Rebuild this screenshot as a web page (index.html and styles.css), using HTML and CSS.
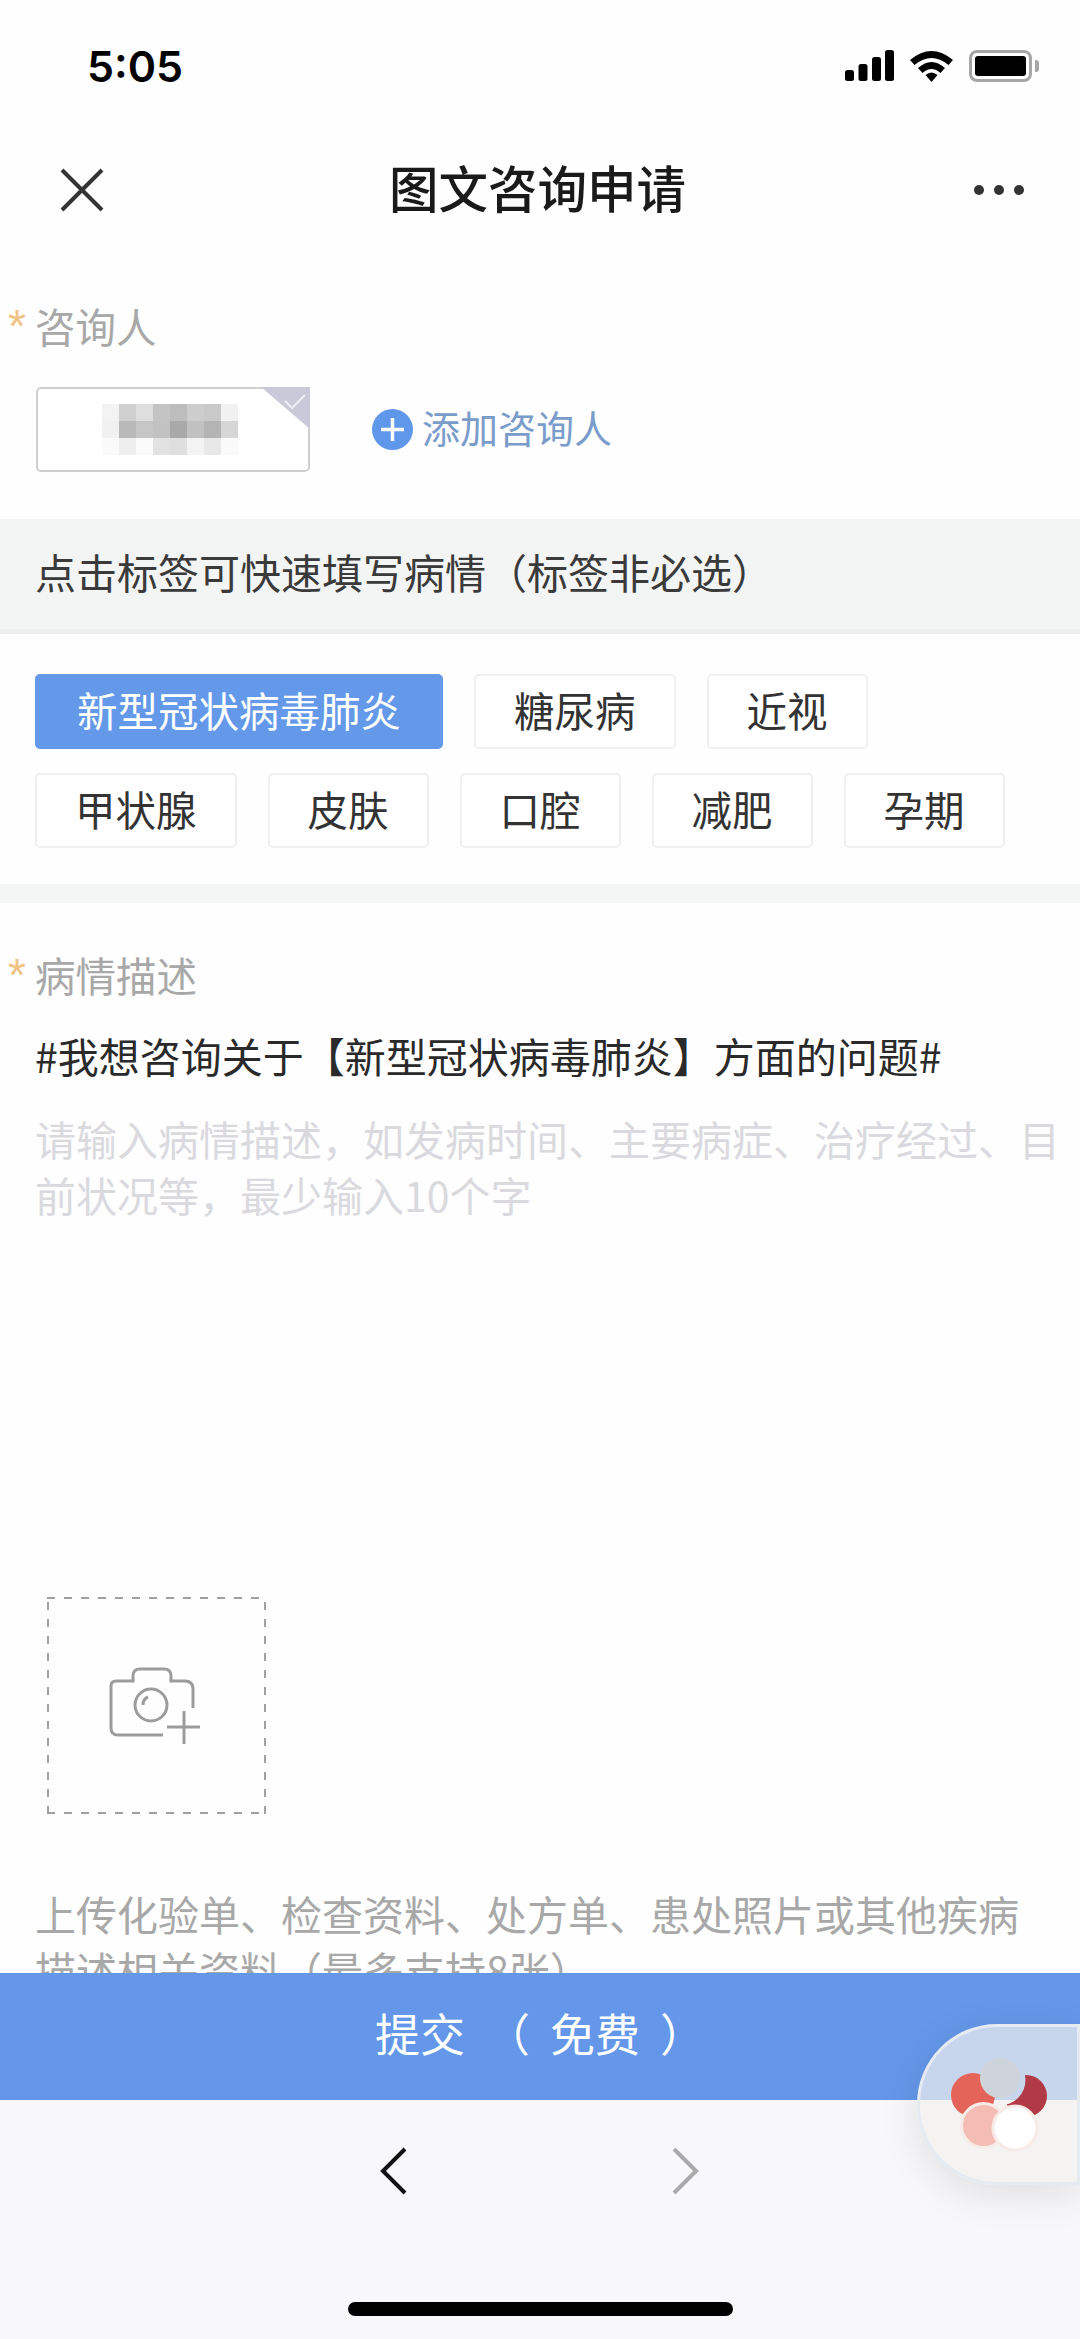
FILE: index.html
```html
<!DOCTYPE html>
<html lang="zh-CN">
  <head>
    <meta charset="UTF-8" />
    <meta name="viewport" content="width=device-width, initial-scale=1.0" />
    <title>图文咨询申请</title>
    <link rel="stylesheet" href="styles.css">
  </head>
  <body>
    <div class="phone">
      <div class="status-bar">
        <span class="time">5:05</span>
        <div class="status-icons">
          <svg width="49" height="32" viewBox="0 0 49 32">
            <rect x="0" y="20" width="9" height="11" rx="2.5" />
            <rect x="13.5" y="14" width="9" height="17" rx="2.5" />
            <rect x="27" y="7" width="9" height="24" rx="2.5" />
            <rect x="40" y="0" width="9" height="31" rx="2.5" />
          </svg>
          <svg width="43" height="32" viewBox="0 0 43 32">
            <path d="M0 10 Q21.5 -8 43 10 L38.5 15 Q21.5 1 4.500 15 Z" />
            <path d="M8 18 Q21.500 6 35 18 L30.500 23 Q21.500 15 12.500 23 Z" />
            <path d="M15.500 25 Q21.500 20 27.500 25 L21.500 32 Z" />
          </svg>
          <div class="battery"><div class="battery-level"></div></div>
          <div class="battery-nub"></div>
        </div>
      </div>

      <div class="nav-bar">
        <svg class="nav-close" width="44" height="44" viewBox="0 0 44 44">
          <path d="M2 2 L42 42 M42 2 L2 42" />
        </svg>
        <h1>图文咨询申请</h1>
        <div class="nav-more"><i></i><i></i><i></i></div>
      </div>

      <div class="content">
        <div class="section patient-section">
          <div class="label"><span class="star">*</span>咨询人</div>
          <div class="patient-row">
            <div class="patient-card">
              <svg class="mosaic" width="136" height="51" viewBox="0 0 8 3">
                <rect x="0" y="0" width="8" height="3" fill="#fafafa" />
                <rect x="0" y="0" width="1" height="1" fill="#f3f3f3" />
                <rect x="1" y="0" width="1" height="1" fill="#cfcfcf" />
                <rect x="2" y="0" width="1" height="1" fill="#dedede" />
                <rect x="3" y="0" width="1" height="1" fill="#c4c4c4" />
                <rect x="4" y="0" width="1" height="1" fill="#bdbdbd" />
                <rect x="5" y="0" width="1" height="1" fill="#cdcdcd" />
                <rect x="6" y="0" width="1" height="1" fill="#c9c9c9" />
                <rect x="7" y="0" width="1" height="1" fill="#f1f1f1" />
                <rect x="0" y="1" width="1" height="1" fill="#f1f1f1" />
                <rect x="1" y="1" width="1" height="1" fill="#b9b9b9" />
                <rect x="2" y="1" width="1" height="1" fill="#c6c6c6" />
                <rect x="3" y="1" width="1" height="1" fill="#c2c2c2" />
                <rect x="4" y="1" width="1" height="1" fill="#a9a9a9" />
                <rect x="5" y="1" width="1" height="1" fill="#c1c1c1" />
                <rect x="6" y="1" width="1" height="1" fill="#b4b4b4" />
                <rect x="7" y="1" width="1" height="1" fill="#d6d6d6" />
                <rect x="1" y="2" width="1" height="1" fill="#eeeeee" />
                <rect x="2" y="2" width="1" height="1" fill="#fbfbfb" />
                <rect x="3" y="2" width="1" height="1" fill="#e2e2e2" />
                <rect x="4" y="2" width="1" height="1" fill="#dfdfdf" />
                <rect x="5" y="2" width="1" height="1" fill="#f3f3f3" />
                <rect x="6" y="2" width="1" height="1" fill="#e8e8e8" />
              </svg>
              <svg class="card-corner" width="49" height="42" viewBox="0 0 49 42">
                <path class="corner-fill" d="M0 0 H49 V42 Z" />
                <path class="corner-check" d="M24 14 L31 21 L44 8" />
              </svg>
            </div>
            <div class="add-patient">
              <svg width="41" height="41" viewBox="0 0 41 41">
                <circle cx="20.500" cy="20.500" r="20.500" fill="#5f97ea" />
                <path d="M9 20.500 H32 M20.500 9 V32" stroke="#fff" stroke-width="3.500" />
              </svg>
              <span>添加咨询人</span>
            </div>
          </div>
        </div>

        <div class="tip">点击标签可快速填写病情（标签非必选）</div>

        <div class="tags">
          <div class="tag-row">
            <span class="tag active">新型冠状病毒肺炎</span>
            <span class="tag">糖尿病</span>
            <span class="tag">近视</span>
          </div>
          <div class="tag-row">
            <span class="tag">甲状腺</span>
            <span class="tag">皮肤</span>
            <span class="tag">口腔</span>
            <span class="tag">减肥</span>
            <span class="tag">孕期</span>
          </div>
        </div>

        <div class="section desc-section">
          <div class="label"><span class="star">*</span>病情描述</div>
          <p class="desc-text">#我想咨询关于【新型冠状病毒肺炎】方面的问题#</p>
          <p class="desc-placeholder">请输入病情描述，如发病时间、主要病症、治疗经过、目前状况等，最少输入10个字</p>
          <div class="upload-box">
            <svg width="92" height="78" viewBox="0 0 92 78">
              <path d="M54 68 H9 Q2 68 2 61 V19 Q2 14 7 14 H24 V9 Q24 2 31 2 H55 Q62 2 62 9 V14 H76 Q84 14 84 22 V41" />
              <circle cx="42" cy="38" r="16" />
              <path d="M34 38 Q34 32 39 30" />
              <path d="M58 60 H91 M75 44 V77" />
            </svg>
          </div>
          <p class="upload-tip">上传化验单、检查资料、处方单、患处照片或其他疾病描述相关资料（最多支持8张）</p>
        </div>
      </div>

      <div class="submit-bar">提交 （ 免费 ）</div>

      <div class="bottom-bar">
        <div class="bottom-nav">
          <svg class="nav-back" width="27" height="48" viewBox="0 0 27 48">
            <path d="M25 2 L3 24 L25 46" />
          </svg>
          <svg class="nav-forward" width="27" height="48" viewBox="0 0 27 48">
            <path d="M2 2 L24 24 L2 46" />
          </svg>
        </div>
        <div class="home-indicator"></div>
      </div>

      <div class="float-widget">
        <svg width="110" height="100" viewBox="0 0 110 100">
          <defs>
            <mask id="petalCut">
              <rect width="110" height="100" fill="#fff" />
              <circle cx="55" cy="26" r="25.500" fill="#000" />
            </mask>
          </defs>
          <circle cx="28" cy="41" r="22" fill="#e5645a" />
          <circle cx="81" cy="42" r="21" fill="#b03a46" mask="url(#petalCut)" />
          <circle cx="55" cy="24" r="20" fill="#ced4da" />
          <circle cx="38.500" cy="71.500" r="22" fill="#f4bdb4" stroke="#f7ebe8" stroke-width="3" />
          <circle cx="70" cy="74" r="22" fill="#ffffff" stroke="#f7ebe8" stroke-width="3" />
        </svg>
      </div>
    </div>
  </body>
</html>
```

FILE: styles.css
```css
* {
  box-sizing: border-box;
}
body {
  margin: 0;
  font-family: "Noto Sans CJK SC", "Liberation Sans", sans-serif;
  background: #fefefe;
}
.phone {
  position: relative;
  width: 1080px;
  height: 2339px;
  display: flex;
  flex-direction: column;
  overflow: hidden;
  background: #fefefe;
}

/* status bar */
.status-bar {
  height: 132px;
  flex-shrink: 0;
  display: flex;
  align-items: center;
  justify-content: space-between;
  padding: 0 41px 0 87px;
}
.time {
  font-family: Inter, "Liberation Sans", sans-serif;
  font-size: 43px;
  font-weight: 600;
  color: #000;
}
.status-icons {
  display: flex;
  align-items: center;
  gap: 16px;
}
.status-icons svg {
  fill: #000;
}
.battery {
  width: 63px;
  height: 32px;
  border: 3px solid #a6a6a6;
  border-radius: 8px;
  padding: 3px;
}
.battery-level {
  height: 100%;
  background: #000;
  border-radius: 3px;
}
.battery-nub {
  width: 4px;
  height: 12px;
  margin-left: -13px;
  background: #a6a6a6;
  border-radius: 0 3px 3px 0;
}

/* nav bar */
.nav-bar {
  height: 116px;
  flex-shrink: 0;
  display: flex;
  align-items: center;
  justify-content: space-between;
  padding: 0 56px 0 60px;
}
.nav-close {
  fill: none;
  stroke: #333;
  stroke-width: 4;
}
.nav-bar h1 {
  margin: 0 3px 6px 0;
  font-size: 49.500px;
  font-weight: 500;
  line-height: 60px;
  color: #1a1a1a;
}
.nav-more {
  display: flex;
  gap: 10px;
}
.nav-more i {
  width: 10px;
  height: 10px;
  border-radius: 50%;
  background: #333;
}

/* form */
.content {
  flex: 1;
  min-height: 0;
  overflow: hidden;
}
.label {
  display: flex;
  padding-left: 8px;
  font-size: 40.500px;
  line-height: 56px;
  color: #a8a8a8;
}
.star {
  width: 27px;
  font-family: "Liberation Sans", sans-serif;
  font-size: 46px;
  line-height: 56px;
  color: #efc286;
}
.patient-section {
  padding-top: 50px;
  padding-bottom: 47px;
}
.patient-row {
  display: flex;
  align-items: center;
  margin-top: 33px;
  padding-left: 36px;
}
.patient-card {
  position: relative;
  width: 274px;
  height: 85px;
  display: flex;
  align-items: center;
  padding-left: 64px;
  border: 2px solid #cfcfcf;
  border-radius: 5px;
  background: #fff;
}
.card-corner {
  position: absolute;
  top: -2px;
  right: -2px;
}
.corner-fill {
  fill: #c9c9d9;
}
.corner-check {
  fill: none;
  stroke: #eeeef4;
  stroke-width: 2;
}
.add-patient {
  display: flex;
  align-items: center;
  gap: 9px;
  margin-left: 62px;
  font-size: 38px;
  color: #7a9ccb;
}
.add-patient span {
  padding-bottom: 6px;
}
.tip {
  height: 115px;
  padding: 24px 0 0 35px;
  font-size: 41px;
  line-height: 56px;
  color: #3a3a3a;
  background: #f3f4f4;
  border-bottom: 5px solid #eeeeee;
}
.tags {
  padding: 40px 36px 36px 35px;
  border-bottom: 19px solid #f4f5f5;
  display: flex;
  flex-direction: column;
  gap: 24px;
}
.tag-row {
  display: flex;
  gap: 31px;
}
.tag {
  height: 75px;
  padding: 0 38px;
  font-size: 40.500px;
  line-height: 67px;
  color: #333;
  border: 2px solid #f0f0f0;
  border-radius: 5px;
  background: #fff;
}
.tag.active {
  padding: 0 40px;
  color: #fff;
  background: #6499ea;
  border-color: #6499ea;
}
.desc-section {
  padding-top: 44px;
}
.desc-text,
.desc-placeholder,
.upload-tip {
  margin: 0;
  padding: 0 18px 0 35px;
  font-size: 41px;
  line-height: 56px;
}
.desc-text {
  margin-top: 24px;
  color: #2a2a2a;
}
.desc-placeholder {
  margin-top: 27px;
  color: #dadade;
}
.upload-box {
  width: 219px;
  height: 217px;
  margin: 375px 0 0 47px;
  display: flex;
  align-items: center;
  justify-content: center;
  background-image:
    repeating-linear-gradient(90deg, #a0a0a0 0 8px, transparent 8px 17px),
    repeating-linear-gradient(90deg, #a0a0a0 0 8px, transparent 8px 17px),
    repeating-linear-gradient(0deg, #a0a0a0 0 8px, transparent 8px 17px),
    repeating-linear-gradient(0deg, #a0a0a0 0 8px, transparent 8px 17px);
  background-size: 100% 2px, 100% 2px, 2px 100%, 2px 100%;
  background-position: top, bottom, left, right;
  background-repeat: no-repeat;
}
.upload-box svg {
  margin-right: 3px;
  fill: none;
  stroke: #9c9c9c;
  stroke-width: 3;
}
.desc-section .upload-tip {
  margin-top: 71px;
  padding-right: 40px;
  color: #a8a8a8;
}

/* bottom */
.submit-bar {
  height: 127px;
  flex-shrink: 0;
  display: flex;
  align-items: center;
  justify-content: center;
  padding-bottom: 8px;
  font-size: 45px;
  word-spacing: 10px;
  white-space: pre;
  color: #fff;
  background: #6497e9;
}
.bottom-bar {
  height: 239px;
  flex-shrink: 0;
  display: flex;
  flex-direction: column;
  align-items: center;
  background: #f8f8fa;
}
.bottom-nav {
  display: flex;
  gap: 265px;
  margin-top: 47px;
  margin-left: -1px;
}
.bottom-nav svg {
  fill: none;
  stroke-width: 4;
}
.nav-back {
  stroke: #111;
}
.nav-forward {
  stroke: #aaa;
}
.home-indicator {
  width: 385px;
  height: 14px;
  margin-top: 107px;
  border-radius: 7px;
  background: #000;
}
.float-widget {
  position: absolute;
  top: 2024px;
  left: 917px;
  width: 163px;
  height: 161px;
  padding: 27px 0 0 25px;
  border: 3px solid #e6ebf2;
  border-radius: 80px 0 0 80px;
  background: rgba(242, 241, 238, 0.7);
  box-shadow: 0 10px 40px rgba(0, 0, 0, 0.1);
}
```
